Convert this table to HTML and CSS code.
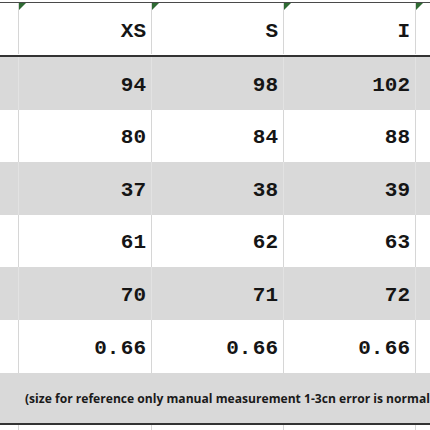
FILE: index.html
```html
<!DOCTYPE html>
<html>
	<head>
		<meta charset="UTF-8">
		<title>size chart</title>
		<link rel="stylesheet" href="styles.css">
	</head>
	<body>
		<div class="sheet">
			<div class="row head">
				<div class="cell"></div>
				<div class="cell mark">XS</div>
				<div class="cell mark">S</div>
				<div class="cell mark">I</div>
				<div class="cell mark"></div>
			</div>
			<div class="row gray tall">
				<div class="cell"></div>
				<div class="cell">94</div>
				<div class="cell">98</div>
				<div class="cell">102</div>
				<div class="cell"></div>
			</div>
			<div class="row">
				<div class="cell"></div>
				<div class="cell">80</div>
				<div class="cell">84</div>
				<div class="cell">88</div>
				<div class="cell"></div>
			</div>
			<div class="row gray tall">
				<div class="cell"></div>
				<div class="cell">37</div>
				<div class="cell">38</div>
				<div class="cell">39</div>
				<div class="cell"></div>
			</div>
			<div class="row">
				<div class="cell"></div>
				<div class="cell">61</div>
				<div class="cell">62</div>
				<div class="cell">63</div>
				<div class="cell"></div>
			</div>
			<div class="row gray tall">
				<div class="cell"></div>
				<div class="cell">70</div>
				<div class="cell">71</div>
				<div class="cell">72</div>
				<div class="cell"></div>
			</div>
			<div class="row tall">
				<div class="cell"></div>
				<div class="cell">0.&#8202;66</div>
				<div class="cell">0.&#8202;66</div>
				<div class="cell">0.&#8202;66</div>
				<div class="cell"></div>
			</div>
			<div class="note">(size for reference only manual measurement 1-3cn error is normal</div>
			<div class="row tail">
				<div class="cell"></div>
				<div class="cell"></div>
				<div class="cell"></div>
				<div class="cell"></div>
				<div class="cell"></div>
			</div>
		</div>
	</body>
</html>
```

FILE: styles.css
```css
* {
	margin: 0;
	padding: 0;
	box-sizing: border-box;
}
body {
	width: 430px;
	height: 430px;
	overflow: hidden;
	background: #fff;
}
.sheet {
	padding-top: 2px;
}
.row {
	display: grid;
	grid-template-columns: 18px 133px 132px 132px 1fr;
	height: 52px;
	background: #fff;
	font-family: "Liberation Mono", "DejaVu Sans Mono", monospace;
	font-weight: bold;
	font-size: 21px;
	color: #151515;
}
.row.tall {
	height: 53px;
}
.cell {
	display: flex;
	align-items: center;
	justify-content: flex-end;
	padding-right: 5px;
	padding-top: 3px;
	border-left: 1px solid #d6d6d6;
	position: relative;
	white-space: pre;
}
.cell:first-child {
	border-left: none;
}
.gray {
	background: #d9d9d9;
}
.gray .cell {
	border-left-color: #e2e2e2;
}
.head {
	height: 55px;
	border-top: 1px solid #4a4a4a;
	border-bottom: 2px solid #333;
	padding-bottom: 1px;
	background: #fff;
}
.head .cell {
	padding-top: 6px;
}
/* green corner marks */
.mark::before {
	content: "";
	position: absolute;
	left: 0;
	top: 0;
	border-top: 7px solid #2f6a33;
	border-right: 7px solid transparent;
}
.note {
	height: 52px;
	background: #d9d9d9;
	border-bottom: 2px solid #333;
	display: flex;
	align-items: center;
	padding-left: 25px;
	white-space: nowrap;
	overflow: hidden;
	font-family: "Open Sans", "DejaVu Sans", sans-serif;
	font-weight: bold;
	font-size: 12.1px;
	color: #1a1a1a;
}
.tail {
	height: 10px;
}
```
